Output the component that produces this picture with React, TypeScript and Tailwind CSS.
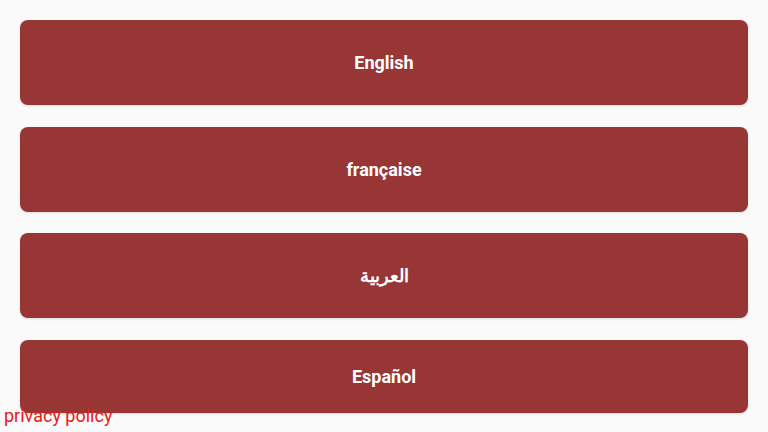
const languages = ['English', 'française', 'العربية', 'Español'];

export default function App() {
  return (
    <div
      className="flex h-[432px] w-[768px] flex-col overflow-hidden bg-[#fafafa]"
      style={{ fontFamily: 'Roboto, "Noto Sans", sans-serif' }}
    >
      <div className="flex flex-col gap-[21.5px] px-5 pt-5">
        {languages.map((lang, i) => (
          <button
            key={lang}
            className={
              i === languages.length - 1
                ? 'flex h-[73px] items-center justify-center rounded-lg bg-[#983636] text-[18px] font-bold text-white shadow-sm'
                : 'flex h-[85px] items-center justify-center rounded-lg bg-[#983636] text-[18px] font-bold text-white shadow-sm'
            }
          >
            {lang}
          </button>
        ))}
      </div>
      <a className="-mt-[9px] pl-1 text-[18px] leading-6 text-[#e81919]">privacy policy</a>
    </div>
  );
}
